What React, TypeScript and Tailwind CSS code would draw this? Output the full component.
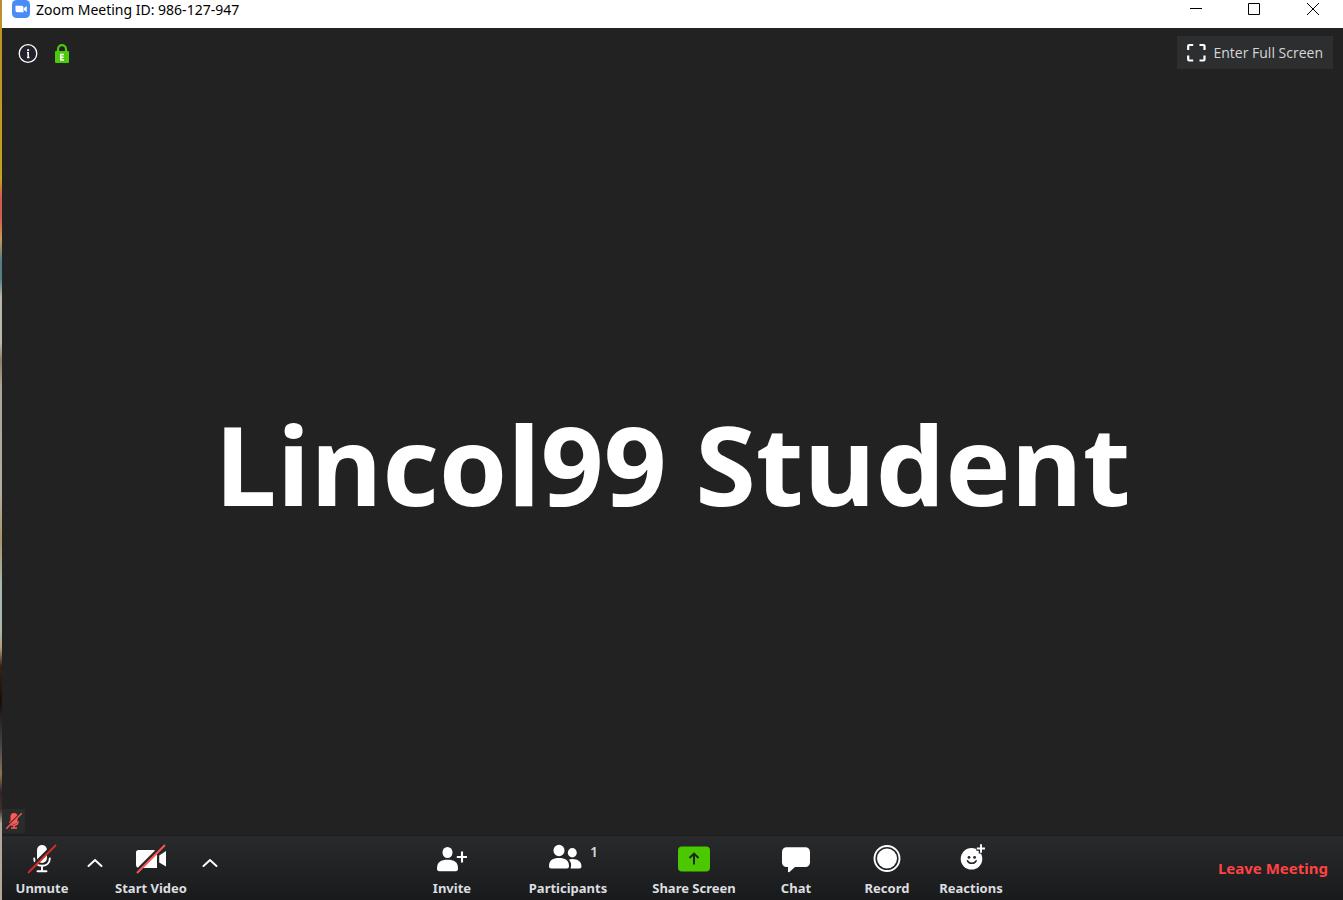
import type { ReactNode } from "react";

function ZoomLogo() {
  return (
    <svg width="18" height="18" viewBox="0 0 18 18" aria-hidden="true">
      <rect width="18" height="18" rx="4.5" fill="#4a8cf7" />
      <path d="M3.5 5.8h6.2a1.8 1.8 0 0 1 1.8 1.8v4.7H5.3a1.8 1.8 0 0 1-1.8-1.8z" fill="#fff" />
      <path d="M12 8.1l2.8-2v6l-2.8-2z" fill="#fff" />
    </svg>
  );
}

function InfoIcon() {
  return (
    <svg width="20" height="20" viewBox="0 0 20 20" aria-hidden="true">
      <circle cx="10" cy="9.5" r="8.8" fill="#22222c" stroke="#fff" strokeWidth="1.3" />
      <rect x="9.200" y="5.200" width="1.900" height="1.900" fill="#fff" />
      <path d="M9 8.800h1.200v4.600M9 13.500h2.500" fill="none" stroke="#fff" strokeWidth="1.500" />
    </svg>
  );
}

function LockIcon() {
  return (
    <svg width="14" height="20" viewBox="0 0 14 20" aria-hidden="true">
      <path d="M3 9V5.2a4 4 0 0 1 8 0V9" fill="none" stroke="#4bc90a" strokeWidth="2.2" />
      <rect y="7" width="14" height="12" rx="1" fill="#4bc90a" />
      <path d="M9 10.600H5.800v5.300H9M5.800 13.200h2.800" fill="none" stroke="#fff" strokeWidth="1.500" />
    </svg>
  );
}

function FullScreenIcon() {
  return (
    <svg width="19" height="20" viewBox="0 0 19 20" fill="none" stroke="#fff" strokeWidth="2.2" aria-hidden="true">
      <path d="M1.200 7V3q0-1 1-1h4M12.500 2h4q1 0 1 1v4M17.500 12.500v4q0 1-1 1h-4M6.200 17.500h-4q-1 0-1-1v-4" />
    </svg>
  );
}

function MicOffIcon() {
  return (
    <svg width="30" height="30" viewBox="0 0 30 30" aria-hidden="true">
      <rect x="10" y="1" width="10" height="18" rx="5" fill="#fff" />
      <path d="M7.2 14.5c0 4.6 3.3 7.3 7.8 7.3s7.8-2.7 7.8-7.3M15 22v5M10.5 27.2h9" fill="none" stroke="#fff" strokeWidth="1.9" strokeLinecap="round" />
      <path d="M2 25.500L27 .5" stroke="#242628" strokeWidth="2.800" />
      <path d="M1 29L29 1" stroke="#e02828" strokeWidth="1.8" />
    </svg>
  );
}

function SmallMicOffIcon() {
  return (
    <svg width="16" height="16" viewBox="0 0 16 16" aria-hidden="true">
      <rect x="4.500" y="0" width="7" height="11" rx="3.500" fill="#ff5959" />
      <path d="M4 8.2c0 2.5 1.6 4 4 4s4-1.5 4-4M8 12v3M5 15h6" fill="none" stroke="#ff5959" strokeWidth="1.5" />
      <path d="M1 13.800L14 .8" stroke="#2b2b2b" strokeWidth="1.400" />
      <path d="M0.3 15.7L15.7 0.3" stroke="#ff5959" strokeWidth="1.3" />
    </svg>
  );
}

function VideoOffIcon() {
  return (
    <svg width="32" height="30" viewBox="0 0 32 30" aria-hidden="true">
      <path d="M3.500 6H18a4 4 0 0 1 4 4v14H4.500a3.500 3.500 0 0 1-3.500-3.500v-12A2.500 2.500 0 0 1 3.500 6z" fill="#fff" />
      <path d="M24.2 11.5L31 7v15.5l-6.800-4z" fill="#fff" />
      <path d="M2 26.500L28 .5" stroke="#242628" strokeWidth="2.800" />
      <path d="M2 29L30 1" stroke="#ff5252" strokeWidth="1.9" />
    </svg>
  );
}

function Chevron() {
  return (
    <svg width="16" height="10" viewBox="0 0 16 10" fill="none" stroke="#fff" strokeWidth="2" strokeLinecap="round" aria-hidden="true">
      <path d="M1.5 8L8 2l6.5 6" />
    </svg>
  );
}

function InviteIcon() {
  return (
    <svg width="30" height="30" viewBox="0 0 30 30" fill="#fff" aria-hidden="true">
      <ellipse cx="10.5" cy="8.500" rx="5" ry="5.600" />
      <path d="M0 24.500c0-6.500 4-8.700 10.500-8.700S21 18 21 24.500c0 1.800-.8 2.800-2.200 2.800H2.200C.8 27.300 0 26.300 0 24.500z" />
      <path d="M25 7.500v11M19.800 13h10.400" stroke="#fff" strokeWidth="2.100" />
    </svg>
  );
}

function ParticipantsIcon() {
  return (
    <svg width="40" height="30" viewBox="0 0 40 30" fill="#fff" aria-hidden="true">
      <ellipse cx="11" cy="6.500" rx="5.500" ry="5.800" />
      <path d="M1 22c0-5.700 4-8 10-8s10 2.300 10 8c0 1.700-.8 2.500-2.200 2.500H3.200C1.800 24.500 1 23.700 1 22z" />
      <ellipse cx="24.300" cy="8.800" rx="4.500" ry="4.700" />
      <path d="M20.800 15.800c1.100-.5 2.200-.7 3.500-.7 5.500 0 9.200 2.800 9.200 7.200 0 1.600-.7 2.200-2 2.200h-9.100c1.600-3.500.4-6.900-1.600-8.700z" />
    </svg>
  );
}

function ShareIcon() {
  return (
    <svg width="32" height="30" viewBox="0 0 32 30" aria-hidden="true">
      <rect y="2.500" width="32" height="25" rx="4" fill="#4bc800" />
      <path d="M16 20.500V10M11.500 14L16 9.600l4.500 4.400" fill="none" stroke="#202722" strokeWidth="2" />
    </svg>
  );
}

function ChatIcon() {
  return (
    <svg width="28" height="30" viewBox="0 0 28 30" fill="#fff" aria-hidden="true">
      <path d="M4.500 3.300h19A4.500 4.500 0 0 1 28 7.800v10.800a4.500 4.500 0 0 1-4.500 4.500H13L7.200 28.300 6 27.900v-4.800H4.500A4.500 4.500 0 0 1 0 18.600V7.800A4.500 4.500 0 0 1 4.500 3.300z" />
    </svg>
  );
}

function RecordIcon() {
  return (
    <svg width="28" height="30" viewBox="0 0 28 30" aria-hidden="true">
      <circle cx="14" cy="14.500" r="12.500" fill="none" stroke="#fff" strokeWidth="1.900" />
      <circle cx="14" cy="14.500" r="10" fill="#fff" />
    </svg>
  );
}

function ReactionsIcon() {
  return (
    <svg width="28" height="30" viewBox="0 0 28 30" aria-hidden="true">
      <circle cx="14.500" cy="14.800" r="10.800" fill="#fff" />
      <path d="M24 .5v9M19.300 4.500h9" stroke="#242628" strokeWidth="4.500" />
      <path d="M24 .3v8.400M19.800 4.500H28" stroke="#fff" strokeWidth="1.900" />
      <circle cx="12" cy="13.400" r="1.400" fill="#242628" />
      <circle cx="17.600" cy="13.400" r="1.400" fill="#242628" />
      <path d="M10.500 16.800c1 1.900 2.400 2.500 4.300 2.500s3.300-.6 4.300-2.500" fill="none" stroke="#242628" strokeWidth="1.600" strokeLinecap="round" />
    </svg>
  );
}

type ToolProps = { label: string; width: string; icon: ReactNode; badge?: string };

function Tool({ label, width, icon, badge }: ToolProps) {
  return (
    <button type="button" className={`relative flex flex-col items-center gap-1 pt-2 ${width}`}>
      {icon}
      <span className="text-[13px] leading-5 font-bold whitespace-nowrap text-[#dddee0]">{label}</span>
      {badge && (
        <span className="absolute top-1.5 left-1/2 ml-[22px] text-sm leading-5 font-semibold text-[#d8d8d8]">{badge}</span>
      )}
    </button>
  );
}

function Caret({ label, width }: { label: string; width: string }) {
  return (
    <button type="button" aria-label={label} className={`flex justify-center pt-[22px] ${width}`}>
      <Chevron />
    </button>
  );
}

export default function App() {
  return (
    <div className="flex min-h-screen bg-[#222222] font-['Noto_Sans','Open_Sans',sans-serif]">
      <div className="w-0.5 shrink-0 bg-[linear-gradient(to_bottom,#b98a3c_0%,#bd9420_3%,#c6a020_20%,#d25a50_22%,#d25a50_24%,#c79a50_26.500%,#4f7f88_29%,#558088_31%,#b9b5a9_33%,#bcb8ac_38%,#8c8168_40%,#aaa595_43%,#b3ad9d_55%,#a9946a_60%,#a9b9ae_65%,#a9b9ae_70%,#b39b79_72%,#352317_74%,#160e09_78%,#4a4550_83%,#8c7352_86%,#2f2528_88%,#3c3032_90%,#b0a898_91.500%,#b0a898_100%)]" />
      <div className="flex min-w-0 flex-1 flex-col">
        <header className="flex h-7 items-start justify-between bg-white">
          <div className="flex items-start gap-1.5 pl-2.5">
            <ZoomLogo />
            <h1 className="text-sm leading-5 text-black">Zoom Meeting ID: 986-127-947</h1>
          </div>
          <div className="flex">
            <button type="button" aria-label="Minimize" className="flex h-[18px] w-[58px] items-center justify-center">
              <svg width="12" height="12" viewBox="0 0 12 12" stroke="#000"><path d="M0 5.500h12" /></svg>
            </button>
            <button type="button" aria-label="Maximize" className="flex h-[18px] w-[58px] items-center justify-center">
              <svg width="12" height="12" viewBox="0 0 12 12" fill="none" stroke="#000"><path d="M.5.5h11v11H.5z" /></svg>
            </button>
            <button type="button" aria-label="Close" className="flex h-[18px] w-15 items-center justify-center">
              <svg width="12" height="12" viewBox="0 0 12 12" stroke="#000"><path d="M0 0l12 12M12 0L0 12" /></svg>
            </button>
          </div>
        </header>

        <main className="flex flex-1 flex-col justify-between">
          <div className="flex items-start justify-between pt-2 pr-2.5 pl-4">
            <div className="flex gap-[17px] pt-2">
              <button type="button" aria-label="Meeting information"><InfoIcon /></button>
              <button type="button" aria-label="Encrypted"><LockIcon /></button>
            </div>
            <button type="button" className="flex h-[33px] items-center gap-[7px] bg-[#2d2e30] px-2.5 font-['Open_Sans','Noto_Sans',sans-serif] text-sm leading-5 text-[#d6d6d6]">
              <FullScreenIcon />
              Enter Full Screen
            </button>
          </div>
          <p className="pt-12 text-center font-['Open_Sans','Noto_Sans',sans-serif] text-[110px] leading-[120px] font-bold whitespace-nowrap text-white">Lincol99 Student</p>
          <div className="flex">
            <div className="mb-0.5 flex h-6 w-[23px] items-center justify-center bg-[#2b2b2b]">
              <SmallMicOffIcon />
            </div>
          </div>
        </main>

        <footer className="flex h-[65px] items-start justify-between border-t border-[#1b1b1c] bg-linear-to-b from-[#292a2c] to-[#191a1c]">
          <div className="flex">
            <Tool label="Unmute" width="w-20" icon={<MicOffIcon />} />
            <Caret label="Audio options" width="w-[26px]" />
            <Tool label="Start Video" width="w-[86px]" icon={<VideoOffIcon />} />
            <Caret label="Video options" width="w-8" />
          </div>
          <div className="flex">
            <Tool label="Invite" width="w-[84px]" icon={<InviteIcon />} />
            <Tool label="Participants" width="w-[148px]" icon={<ParticipantsIcon />} badge="1" />
            <Tool label="Share Screen" width="w-[104px]" icon={<ShareIcon />} />
            <Tool label="Chat" width="w-[100px]" icon={<ChatIcon />} />
            <Tool label="Record" width="w-[82px]" icon={<RecordIcon />} />
            <Tool label="Reactions" width="w-[86px]" icon={<ReactionsIcon />} />
          </div>
          <button type="button" className="pt-[22px] pr-[15px] pl-5 text-[15px] leading-5 font-bold whitespace-nowrap text-[#ff4242]">
            Leave Meeting
          </button>
        </footer>
      </div>
    </div>
  );
}
